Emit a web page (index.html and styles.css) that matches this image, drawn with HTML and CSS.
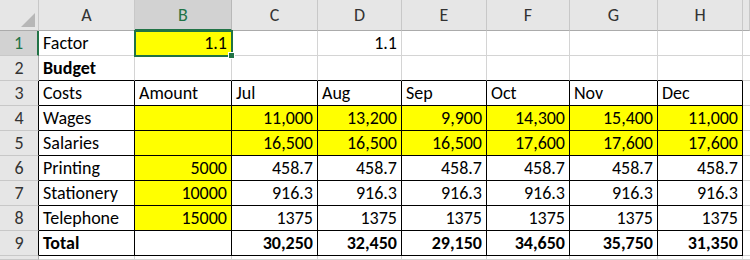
FILE: index.html
```html
<!DOCTYPE html>
<html>
<head>
<meta charset="utf-8">
<link rel="stylesheet" href="styles.css">
</head>
<body>
<div class="sheet">
  <div class="c h corner"><svg class="tri" width="14" height="14" viewBox="0 0 14 14"><polygon points="14,0 14,14 0,14" fill="#b7b7b7"/></svg></div>
  <div class="c h">A</div>
  <div class="c h sel">B</div>
  <div class="c h">C</div>
  <div class="c h">D</div>
  <div class="c h">E</div>
  <div class="c h">F</div>
  <div class="c h">G</div>
  <div class="c h">H</div>
  <div class="c h"></div>

  <div class="c rh rsel">1</div>
  <div class="c">Factor</div>
  <div class="c y n active">1.1</div>
  <div class="c"></div>
  <div class="c n">1.1</div>
  <div class="c"></div>
  <div class="c"></div>
  <div class="c"></div>
  <div class="c"></div>
  <div class="c"></div>

  <div class="c rh">2</div>
  <div class="c b bt">Budget</div>
  <div class="c bt"></div>
  <div class="c bt"></div>
  <div class="c bt"></div>
  <div class="c bt"></div>
  <div class="c bt"></div>
  <div class="c bt"></div>
  <div class="c bt"></div>
  <div class="c"></div>

  <div class="c rh rb">3</div>
  <div class="c bx">Costs</div>
  <div class="c bx">Amount</div>
  <div class="c bx">Jul</div>
  <div class="c bx">Aug</div>
  <div class="c bx">Sep</div>
  <div class="c bx">Oct</div>
  <div class="c bx">Nov</div>
  <div class="c bx">Dec</div>
  <div class="c"></div>

  <div class="c rh rb">4</div>
  <div class="c bx">Wages</div>
  <div class="c bx y"></div>
  <div class="c bx y n">11,000</div>
  <div class="c bx y n">13,200</div>
  <div class="c bx y n">9,900</div>
  <div class="c bx y n">14,300</div>
  <div class="c bx y n">15,400</div>
  <div class="c bx y n">11,000</div>
  <div class="c"></div>

  <div class="c rh rb">5</div>
  <div class="c bx">Salaries</div>
  <div class="c bx y"></div>
  <div class="c bx y n">16,500</div>
  <div class="c bx y n">16,500</div>
  <div class="c bx y n">16,500</div>
  <div class="c bx y n">17,600</div>
  <div class="c bx y n">17,600</div>
  <div class="c bx y n">17,600</div>
  <div class="c"></div>

  <div class="c rh rb">6</div>
  <div class="c bx">Printing</div>
  <div class="c bx y n">5000</div>
  <div class="c bx n">458.7</div>
  <div class="c bx n">458.7</div>
  <div class="c bx n">458.7</div>
  <div class="c bx n">458.7</div>
  <div class="c bx n">458.7</div>
  <div class="c bx n">458.7</div>
  <div class="c"></div>

  <div class="c rh rb">7</div>
  <div class="c bx">Stationery</div>
  <div class="c bx y n">10000</div>
  <div class="c bx n">916.3</div>
  <div class="c bx n">916.3</div>
  <div class="c bx n">916.3</div>
  <div class="c bx n">916.3</div>
  <div class="c bx n">916.3</div>
  <div class="c bx n">916.3</div>
  <div class="c"></div>

  <div class="c rh rb">8</div>
  <div class="c bx">Telephone</div>
  <div class="c bx y n">15000</div>
  <div class="c bx n">1375</div>
  <div class="c bx n">1375</div>
  <div class="c bx n">1375</div>
  <div class="c bx n">1375</div>
  <div class="c bx n">1375</div>
  <div class="c bx n">1375</div>
  <div class="c"></div>

  <div class="c rh rb">9</div>
  <div class="c bx b">Total</div>
  <div class="c bx"></div>
  <div class="c bx n b">30,250</div>
  <div class="c bx n b">32,450</div>
  <div class="c bx n b">29,150</div>
  <div class="c bx n b">34,650</div>
  <div class="c bx n b">35,750</div>
  <div class="c bx n b">31,350</div>
  <div class="c"></div>

  <div class="c rh"></div>
  <div class="c"></div>
  <div class="c"></div>
  <div class="c"></div>
  <div class="c"></div>
  <div class="c"></div>
  <div class="c"></div>
  <div class="c"></div>
  <div class="c"></div>
  <div class="c"></div>
</div>
</body>
</html>
```

FILE: styles.css
```css
html, body {
  margin: 0;
  padding: 0;
  background: #ffffff;
  overflow: hidden;
}

.sheet {
  display: grid;
  grid-template-columns: 39px 96px 97px 86px 84px 85px 83px 88px 85px 7px;
  grid-template-rows: 31px repeat(9, 25px) 4px;
  font-family: "Carlito", "Calibri", "Lato", sans-serif;
  font-size: 18px;
  color: #000000;
  width: 750px;
  height: 260px;
  overflow: hidden;
}

.c {
  box-sizing: border-box;
  border-right: 1px solid #d4d4d4;
  border-bottom: 1px solid #d4d4d4;
  padding: 1px 4px 0 4px;
  line-height: 23px;
  white-space: nowrap;
  overflow: hidden;
}

.h {
  background: #e6e6e6;
  border-right-color: #c8c8c8;
  border-bottom-color: #ababab;
  text-align: center;
  color: #333333;
  line-height: 28px;
  padding: 1px 0 0 0;
}

.corner {
  position: relative;
}

.tri {
  position: absolute;
  right: 3px;
  bottom: 3px;
}

.sel {
  background: #d2d2d2;
  color: #217346;
  border-bottom: 2px solid #217346;
  border-right-color: #b8b8b8;
}

.rh {
  background: #e6e6e6;
  border-right-color: #ababab;
  border-bottom-color: #c8c8c8;
  text-align: center;
  color: #333333;
  padding: 1px 0 0 0;
}

.rsel {
  background: #d2d2d2;
  color: #217346;
  border-right: 2px solid #217346;
}

.rb {
  border-right-color: #000000;
}

.y {
  background: #ffff00;
}

.n {
  text-align: right;
}

.b {
  font-weight: bold;
}

.bt {
  border-bottom-color: #000000;
}

.bx {
  border-right-color: #000000;
  border-bottom-color: #000000;
}

.active {
  position: relative;
  outline: 2px solid #217346;
  outline-offset: -1px;
  overflow: visible;
  z-index: 2;
}

.active::after {
  content: "";
  position: absolute;
  right: -4px;
  bottom: -4px;
  width: 5px;
  height: 5px;
  background: #217346;
  border: 1px solid #ffffff;
}
```
